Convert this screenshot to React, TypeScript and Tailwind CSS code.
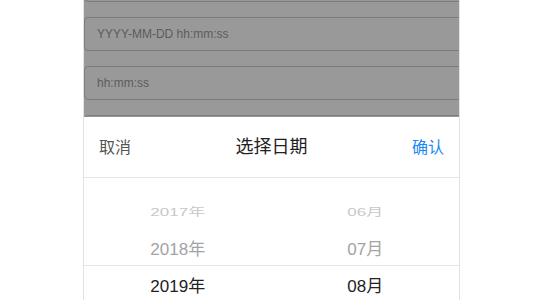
import React from "react";

const font = { fontFamily: '"Liberation Sans", "Noto Sans CJK SC", sans-serif' };

function FakeInput({ text }: { text: string }) {
  return (
    <div className="h-[34px] w-[400px] shrink-0 rounded-[4px] border border-[#7b7b7b] bg-[#999999] pl-[12px] flex items-center text-[12px] text-[#5c5c5c]">
      {text}
    </div>
  );
}

export default function App() {
  return (
    <div className="w-[540px] h-[300px] bg-white overflow-hidden flex" style={font}>
      <div className="ml-[83px] w-[377px] h-[300px] border-x border-[#e2e2e2] flex flex-col overflow-hidden shrink-0">
        <div className="h-[117px] shrink-0 bg-[#999999] overflow-hidden">
          <div className="mt-[-32px] flex flex-col gap-[15px]">
            <FakeInput text="" />
            <FakeInput text="YYYY-MM-DD hh:mm:ss" />
            <FakeInput text="hh:mm:ss" />
            <FakeInput text="" />
          </div>
        </div>
        <div className="h-[61px] shrink-0 border-b border-[#e5e5e5] px-[15px] pt-[1px] flex items-center justify-between">
          <span className="text-[16px] text-[#555555]">取消</span>
          <span className="text-[18px] text-[#222222]">选择日期</span>
          <span className="text-[16px] text-[#1a88f5]">确认</span>
        </div>
        <div className="flex flex-col pt-[15px]">
          <div className="h-[36px] pt-[3px] flex items-center text-[17px] text-[#c8c8c8]">
            <div className="flex-1 text-center scale-y-[0.68]">2017年</div>
            <div className="flex-1 text-center scale-y-[0.68]">06月</div>
          </div>
          <div className="h-[36px] pt-[5px] flex items-center text-[17px] text-[#a3a3a3]">
            <div className="flex-1 text-center">2018年</div>
            <div className="flex-1 text-center">07月</div>
          </div>
          <div className="h-[37px] pt-[5px] border-t border-[#e5e5e5] flex items-center text-[17px] text-[#222222]">
            <div className="flex-1 text-center">2019年</div>
            <div className="flex-1 text-center">08月</div>
          </div>
        </div>
      </div>
    </div>
  );
}
